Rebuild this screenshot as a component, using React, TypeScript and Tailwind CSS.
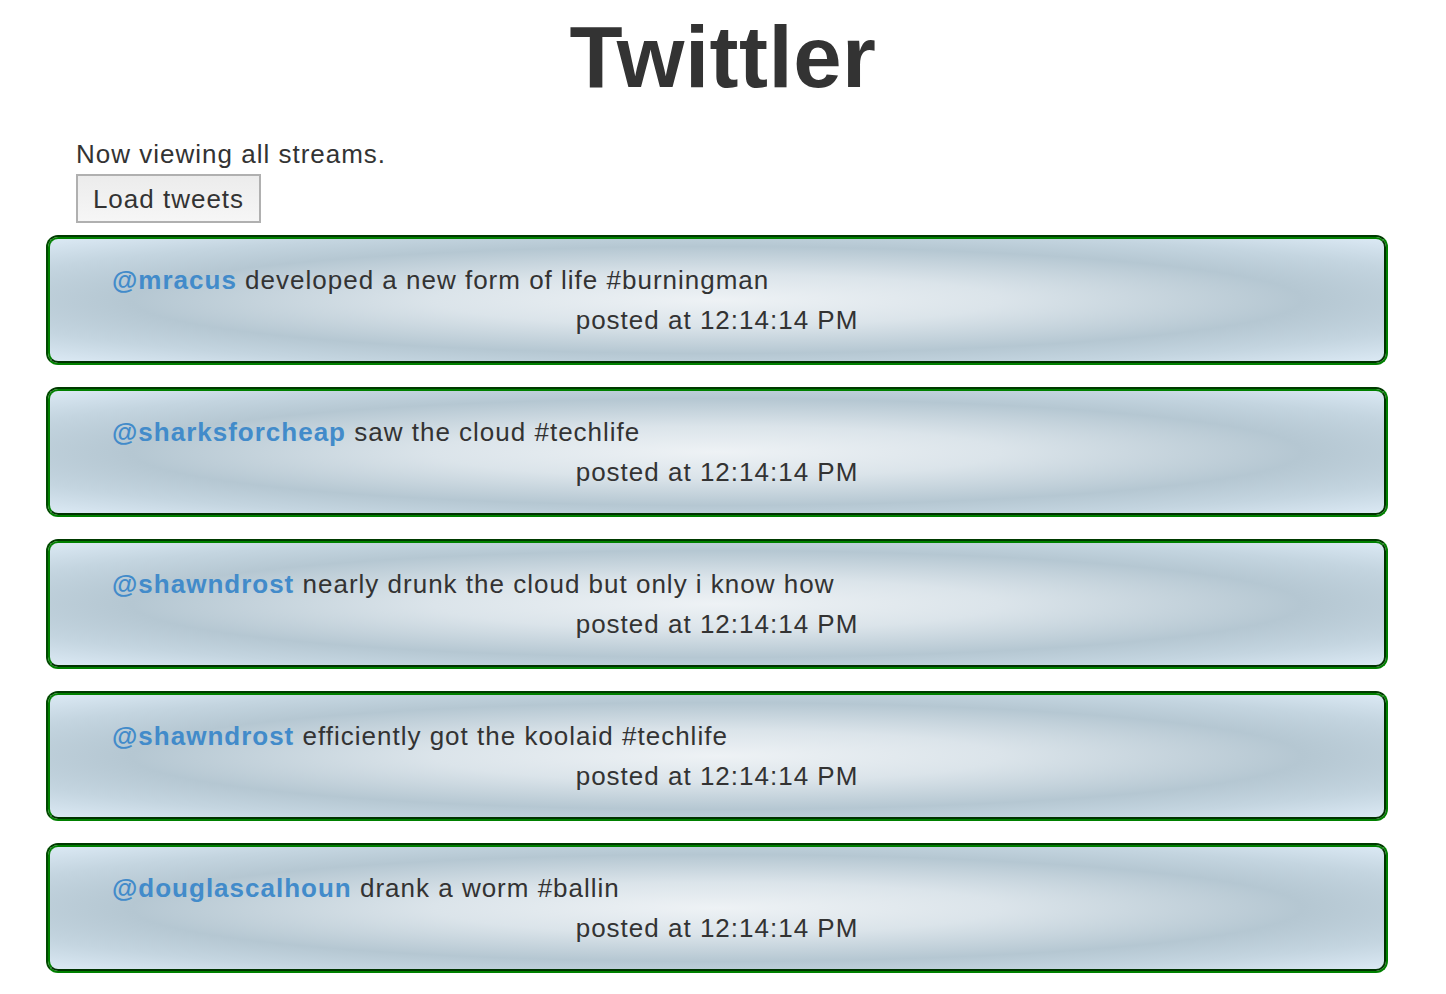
import React from "react";

const tweets = [
  { user: "mracus", text: "developed a new form of life #burningman" },
  { user: "sharksforcheap", text: "saw the cloud #techlife" },
  { user: "shawndrost", text: "nearly drunk the cloud but only i know how" },
  { user: "shawndrost", text: "efficiently got the koolaid #techlife" },
  { user: "douglascalhoun", text: "drank a worm #ballin" },
];

function Tweet({ user, text }: { user: string; text: string }) {
  return (
    <div className="mb-[22px] rounded-[12px] border-2 border-t-[#003a00] border-l-[#004a00] border-b-[#008000] border-r-[#008000]">
      <div className="rounded-[10px] border-2 border-t-[#008000] border-l-[#008000] border-b-[#003300] border-r-[#003300] bg-[radial-gradient(ellipse_farthest-corner_at_center,#eef2f5_0%,#dbe4ea_30%,#b5c7d2_62%,#c4d5e0_80%,#dbe9f4_100%)] pl-[62px] pr-[20px] py-[21px] leading-[40px]">
        <div>
          <span className="font-bold text-[#428bca]">@{user}</span> {text}
        </div>
        <div className="pr-[42px] text-center">posted at 12:14:14 PM</div>
      </div>
    </div>
  );
}

export default function App() {
  return (
    <div className="min-h-screen bg-white font-['Liberation_Sans',Arial,sans-serif] text-[26px] tracking-[1px] text-[#333]">
      <h1 className="pt-[4px] text-center text-[87px] font-bold leading-[106px] tracking-[0.5px]">
        Twittler
      </h1>
      <div className="mt-[24px] pl-[76px] leading-[40px]">Now viewing all streams.</div>
      <div className="pl-[76px]">
        <button className="h-[49px] w-[185px] border-2 border-[#b0b0b0] bg-gradient-to-b from-[#ececec] to-[#f6f6f6] text-[26px] leading-none tracking-[1px] text-[#333]">
          Load tweets
        </button>
      </div>
      <div className="ml-[46px] mt-[12px] w-[1342px]">
        {tweets.map((t, i) => (
          <Tweet key={i} user={t.user} text={t.text} />
        ))}
      </div>
    </div>
  );
}
